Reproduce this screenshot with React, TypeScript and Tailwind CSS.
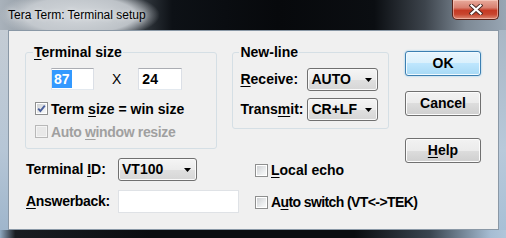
import React from 'react';

const font = "font-['Liberation_Sans',Arial,sans-serif]";

const Arrow = () => (
  <svg width="7" height="4" viewBox="0 0 7 4" className="shrink-0">
    <polygon points="0,0 7,0 3.5,4" fill="#000" />
  </svg>
);

const Combo: React.FC<{ value: string; w: string }> = ({ value, w }) => (
  <div
    className={`${w} h-[23px] flex items-center justify-between pl-[3px] pr-[5px] border border-[#707070] rounded-[3px] bg-[linear-gradient(#f5f5f5,#ececec_50%,#e0e0e0_50%,#d6d6d6)] shadow-[inset_0_0_0_1px_#fafafa]`}
  >
    <span className="font-bold">{value}</span>
    <Arrow />
  </div>
);

const CheckBox: React.FC<{ checked?: boolean; disabled?: boolean }> = ({ checked, disabled }) => (
  <div
    className={`w-[13px] h-[13px] shrink-0 border p-[1px] ${
      disabled ? 'border-[#b8b8b8] bg-[#f4f4f4]' : 'border-[#8e8f8f] bg-white'
    }`}
  >
    <div
      className={`w-full h-full ${
        disabled
          ? 'bg-[#e8e8e8]'
          : 'bg-[linear-gradient(135deg,#cfd1d4,#eef0f1_70%,#f8f8f8)]'
      }`}
    >
      {checked && (
        <svg width="9" height="9" viewBox="0 0 9 9">
          <path d="M1.2 4.6 L3.4 7 L7.8 1.6" fill="none" stroke="#4a5f9c" strokeWidth="1.9" />
        </svg>
      )}
    </div>
  </div>
);

const Button: React.FC<{ primary?: boolean; children: React.ReactNode }> = ({ primary, children }) => (
  <div
    className={`w-[76px] h-[25px] flex items-center justify-center rounded-[3px] border font-bold ${
      primary
        ? 'border-[#3c7fb1] bg-[linear-gradient(#eaf6fd,#d9f0fc_50%,#bee6fd_50%,#a7d9f5)] shadow-[inset_0_0_0_1px_#f0faff,0_0_2px_#7fc3ec]'
        : 'border-[#707070] bg-[linear-gradient(#f2f2f2,#ebebeb_50%,#dddddd_50%,#cfcfcf)] shadow-[inset_0_0_0_1px_#fcfcfc]'
    }`}
  >
    {children}
  </div>
);

const U: React.FC<{ children: React.ReactNode }> = ({ children }) => (
  <span className="underline underline-offset-[2px] decoration-1">{children}</span>
);

export default function App() {
  return (
    <div className={`${font} w-[506px] h-[238px] flex flex-col overflow-hidden bg-[#b9c9d9] text-[14px] text-black`}>
      {/* Title bar */}
      <div className="h-[30px] shrink-0 flex items-start justify-between bg-[linear-gradient(90deg,#a9b2bb_0%,#5b636b_22%,#0d1116_34%,#07090c_55%,#0b0e12_74%,#3d444c_84%,#7d8995_92%,#98a6b4_100%)]">
        <div className="h-[30px] flex items-center pl-[8px] pr-[14px] bg-[radial-gradient(closest-side,rgba(212,216,220,1),rgba(200,205,210,0.9)_70%,rgba(200,205,210,0))] [background-size:100%_170%] [background-position:center] text-[12px] text-black [text-shadow:0_0_5px_rgba(255,255,255,0.8)]">
          Tera Term: Terminal setup
        </div>
        <div className="mr-[7px] w-[47px] h-[20px] flex items-center justify-center rounded-b-[5px] border border-t-0 border-[#5a2319] bg-[linear-gradient(#e8ab9c,#d88070_40%,#c53a24_55%,#c8452e_75%,#dc8a74)] shadow-[inset_0_0_0_1px_rgba(255,220,210,0.5)]">
          <svg width="14" height="11" viewBox="0 0 14 11">
            <path d="M2.5 1.5 L11.5 9.5 M11.5 1.5 L2.5 9.5" stroke="#4a2a24" strokeWidth="4" strokeLinecap="square" />
            <path d="M2.5 1.5 L11.5 9.5 M11.5 1.5 L2.5 9.5" stroke="#fff" strokeWidth="2.2" strokeLinecap="square" />
          </svg>
        </div>
      </div>

      {/* Frame + client */}
      <div className="flex flex-1 min-h-0">
        <div className="w-[8px] shrink-0 bg-[linear-gradient(#c4ccd4,#b6c6d6_60%,#9fb6cc)]" />
        <div className="flex-1 flex border border-[#8a98a6] bg-[#f0f0f0] pl-[16px] pt-[13px]">
          {/* Left column */}
          <div className="w-[364px] shrink-0 flex flex-col">
            <div className="flex gap-[15px]">
              <fieldset className="w-[193px] border border-[#d5dfe5] rounded-[3px] pb-[10px]">
                <legend className="ml-[7px] px-[1px] leading-[16px] font-bold">
                  <U>T</U>erminal size
                </legend>
                <div className="mt-[8px] ml-[25px] flex items-center">
                  <div className="w-[43px] h-[22px] flex items-stretch py-[1px] border border-[#abadb3] border-b-[#e3e9ef] border-x-[#dbdfe6] bg-white">
                    <span className="flex items-center px-[2px] bg-[#3399ff] text-white font-bold">87</span>
                  </div>
                  <span className="ml-[18px] mr-[17px]">X</span>
                  <div className="w-[44px] h-[22px] flex items-center pl-[3px] border border-[#abadb3] border-b-[#e3e9ef] border-x-[#dbdfe6] bg-white font-bold">
                    24
                  </div>
                </div>
                <div className="mt-[12px] ml-[9px] h-[13px] flex items-center gap-[3px] whitespace-nowrap">
                  <CheckBox checked />
                  <span className="font-bold leading-[16px]">
                    Term <U>s</U>ize = win size
                  </span>
                </div>
                <div className="mt-[10px] ml-[9px] h-[13px] flex items-center gap-[3px] whitespace-nowrap">
                  <CheckBox disabled />
                  <span className="font-bold leading-[16px] tracking-[-0.35px] text-[#a0a0a0]">
                    Auto <U>w</U>indow resize
                  </span>
                </div>
              </fieldset>

              <fieldset className="w-[157px] self-start border border-[#d5dfe5] rounded-[3px] pb-[7px]">
                <legend className="ml-[6px] px-[1px] leading-[16px] font-bold">New-line</legend>
                <div className="mt-[8px] ml-[7px] flex items-center">
                  <span className="w-[67px] font-bold">
                    <U>R</U>eceive:
                  </span>
                  <Combo value="AUTO" w="w-[71px]" />
                </div>
                <div className="mt-[7px] ml-[7px] flex items-center">
                  <span className="w-[67px] font-bold">
                    Trans<U>m</U>it:
                  </span>
                  <Combo value="CR+LF" w="w-[71px]" />
                </div>
              </fieldset>
            </div>

            <div className="mt-[9px] h-[23px] flex items-center whitespace-nowrap">
              <div className="w-[230px] shrink-0 flex items-center">
                <span className="ml-[1px] w-[92px] font-bold">
                  Terminal <U>I</U>D:
                </span>
                <Combo value="VT100" w="w-[79px]" />
              </div>
              <div className="flex items-center gap-[3px] mt-[2px]">
                <CheckBox />
                <span className="font-bold">
                  <U>L</U>ocal echo
                </span>
              </div>
            </div>

            <div className="mt-[9px] h-[23px] flex items-center whitespace-nowrap">
              <div className="w-[230px] shrink-0 flex items-center">
                <span className="ml-[1px] w-[92px] font-bold tracking-[-0.3px]">
                  <U>A</U>nswerback:
                </span>
                <div className="w-[121px] h-[23px] border border-[#dfe2e6] bg-white" />
              </div>
              <div className="flex items-center gap-[3px] mt-[2px]">
                <CheckBox />
                <span className="font-bold tracking-[-0.6px]">
                  A<U>u</U>to switch (VT&lt;-&gt;TEK)
                </span>
              </div>
            </div>
          </div>

          {/* Buttons */}
          <div className="ml-[16px] pt-[7px] flex flex-col">
            <Button primary>OK</Button>
            <div className="mt-[15px]">
              <Button>Cancel</Button>
            </div>
            <div className="mt-[22px]">
              <Button>
                <U>H</U>elp
              </Button>
            </div>
          </div>
        </div>
        <div className="w-[7px] shrink-0 bg-[linear-gradient(#a9b7c5,#b8c9da_60%,#a8c0d6)]" />
      </div>

      {/* Bottom frame */}
      <div className="h-[8px] shrink-0 bg-[linear-gradient(90deg,#8fa8c0_0%,#1a1d22_3%,#0a0c0f_30%,#0a0c0f_70%,#3a4550_85%,#a6bdd3_97%,#b0c6da_100%)]" />
    </div>
  );
}
